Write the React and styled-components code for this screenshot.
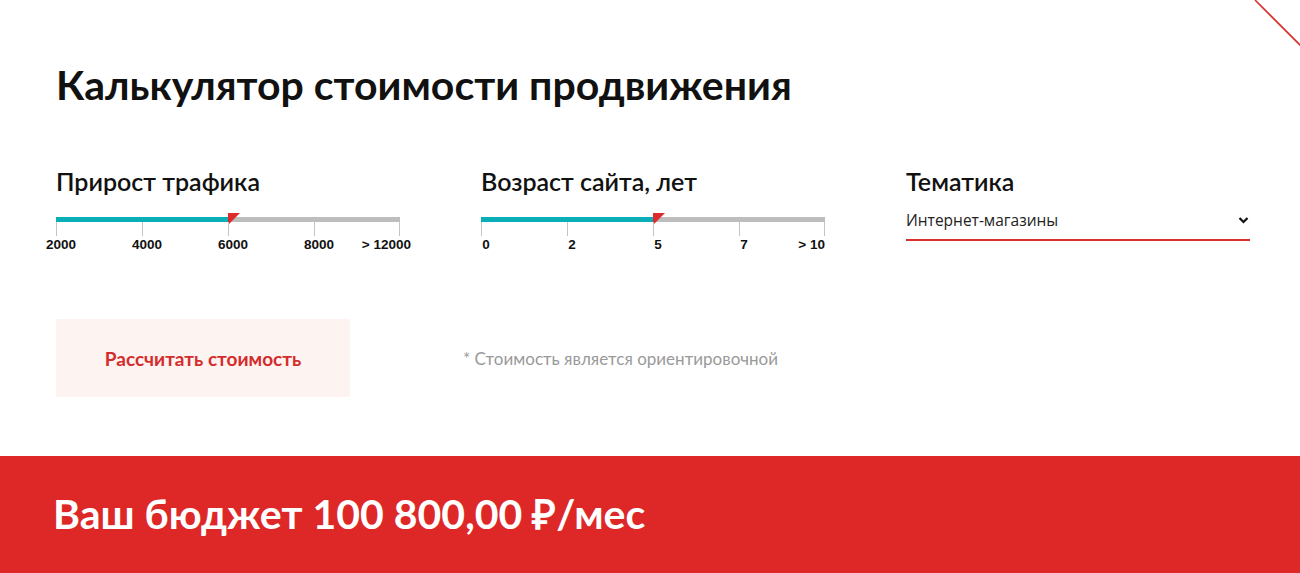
import React from 'react'
import styled, { createGlobalStyle } from 'styled-components'

const GlobalStyle = createGlobalStyle`
    html, body {
        margin: 0;
        padding: 0;
        background: #fff;
    }
    body {
        font-family: Lato, "Open Sans", sans-serif;
        color: #111;
    }
`

const Page = styled.div`
    position: relative;
    width: 1300px;
    height: 573px;
    overflow: hidden;
    display: flex;
    flex-direction: column;
`
const Corner = styled.svg`
    position: absolute;
    top: 0;
    right: 0;
`
const Body = styled.div`
    flex: 1;
    padding: 59px 0 0 56px;
`
const Title = styled.h1`
    margin: 0;
    font-size: 41px;
    font-weight: 700;
    line-height: 52px;
    color: #111;
`
const Fields = styled.div`
    display: grid;
    grid-template-columns: repeat(3, 344px);
    column-gap: 81px;
    margin-top: 55px;
`
const Field = styled.div`
    display: flex;
    flex-direction: column;
`
const Label = styled.div`
    font-size: 25px;
    font-weight: 600;
    line-height: 30px;
    color: #111;
`
const Slider = styled.div`
    position: relative;
    height: 40px;
    margin-top: 21px;
`
const Track = styled.div`
    position: relative;
    height: 5px;
    background: #bdbdbd;
`
const Fill = styled.div`
    height: 100%;
    background: #0aaeb6;
`
const Thumb = styled.div`
    position: absolute;
    top: -4px;
    width: 0;
    height: 0;
    border-top: 12px solid #dd2a2a;
    border-right: 12px solid transparent;
`
const Tick = styled.div`
    position: absolute;
    top: 5px;
    width: 1px;
    height: 14px;
    background: #c4c4c4;
`
const TickLabel = styled.span`
    position: absolute;
    top: 20px;
    font-family: "Liberation Sans", Arial, sans-serif;
    font-size: 13.5px;
    font-weight: 700;
    line-height: 16px;
    color: #111;
    white-space: nowrap;
    transform: translateX(${p => (p.$last ? '-100%' : '-50%')});
`
const Select = styled.div`
    display: flex;
    align-items: center;
    justify-content: space-between;
    height: 38px;
    margin-top: 5px;
    padding-right: 1px;
    border-bottom: 2px solid #d8302f;
    font-family: "Open Sans", sans-serif;
    font-size: 15.5px;
    color: #222;
`
const Actions = styled.div`
    display: flex;
    align-items: center;
    gap: 113px;
    margin-top: 62px;
`
const Button = styled.button`
    width: 294px;
    height: 78px;
    border: none;
    background: #fdf3f1;
    color: #d42c2c;
    font-family: Lato, sans-serif;
    font-size: 19px;
    font-weight: 700;
    cursor: pointer;
`
const Note = styled.span`
    font-size: 17px;
    color: #9a9a9a;
    margin-top: 1px;
`
const Budget = styled.div`
    height: 117px;
    display: flex;
    align-items: center;
    padding-left: 53px;
    padding-bottom: 3px;
    box-sizing: border-box;
    background: #de2828;
    color: #fff;
    font-size: 41px;
    font-weight: 700;
`

const sliders = [
    { label: 'Прирост трафика', marks: ['2000', '4000', '6000', '8000', '> 12000'], value: 2, lastShift: 11 },
    { label: 'Возраст сайта, лет', marks: ['0', '2', '5', '7', '> 10'], value: 2, lastShift: 0 },
]

const Range = ({ marks, value, lastShift }) => {
    const step = 344 / (marks.length - 1)
    return (
        <Slider>
            <Track>
                <Fill style={{ width: value * step }} />
            </Track>
            <Thumb style={{ left: value * step }} />
            {marks.map((m, i) => (
                <Tick key={'t' + i} style={{ left: Math.min(i * step, 343) }} />
            ))}
            {marks.map((m, i) => {
                const last = i === marks.length - 1
                return (
                    <TickLabel key={m} $last={last} style={{ left: last ? i * step + lastShift : i * step + 5 }}>
                        {m}
                    </TickLabel>
                )
            })}
        </Slider>
    )
}

const App = () => {
    return (
        <Page>
            <GlobalStyle />
            <Corner width="48" height="48" viewBox="0 0 48 48">
                <line x1="3" y1="0" x2="51" y2="48" stroke="#d8302f" strokeWidth="1.6" />
            </Corner>
            <Body>
                <Title>Калькулятор стоимости продвижения</Title>
                <Fields>
                    {sliders.map(s => (
                        <Field key={s.label}>
                            <Label>{s.label}</Label>
                            <Range marks={s.marks} value={s.value} lastShift={s.lastShift} />
                        </Field>
                    ))}
                    <Field>
                        <Label>Тематика</Label>
                        <Select>
                            <span>Интернет-магазины</span>
                            <svg width="11" height="8" viewBox="0 0 11 8">
                                <path d="M1.5 2 L5.5 6 L9.5 2" fill="none" stroke="#111" strokeWidth="2.2" />
                            </svg>
                        </Select>
                    </Field>
                </Fields>
                <Actions>
                    <Button>Рассчитать стоимость</Button>
                    <Note>* Стоимость является ориентировочной</Note>
                </Actions>
            </Body>
            <Budget>Ваш бюджет 100 800,00 ₽/мес</Budget>
        </Page>
    )
}

export default App
